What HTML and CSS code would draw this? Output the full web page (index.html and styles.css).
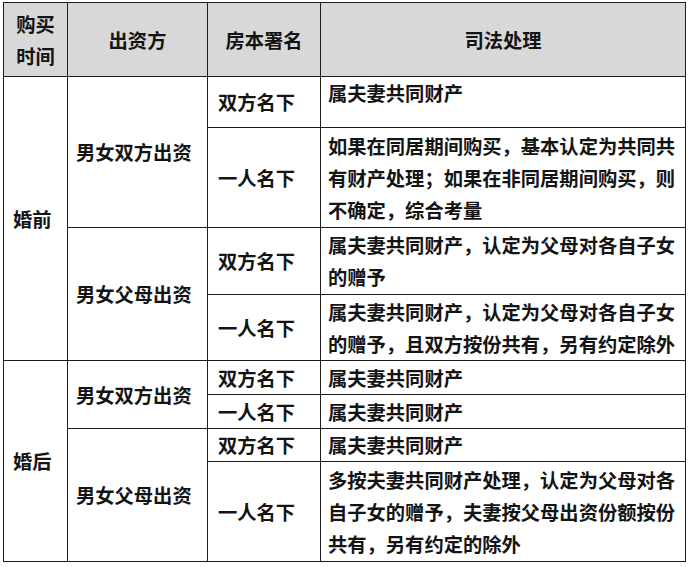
FILE: index.html
```html
<!DOCTYPE html>
<html lang="zh">
<head>
<meta charset="utf-8">
<title>购房出资与司法处理</title>
<link rel="stylesheet" href="styles.css">
</head>
<body>
<table class="grid">
  <colgroup>
    <col class="c-time">
    <col class="c-payer">
    <col class="c-name">
    <col class="c-law">
  </colgroup>
  <thead>
    <tr class="h-head">
      <th class="th-time">购买时间</th>
      <th>出资方</th>
      <th>房本署名</th>
      <th>司法处理</th>
    </tr>
  </thead>
  <tbody>
    <tr class="h-51">
      <td class="cell-time" rowspan="4">婚前</td>
      <td class="cell-payer" rowspan="2">男女双方出资</td>
      <td class="cell-name">双方名下</td>
      <td class="cell-law top">属夫妻共同财产</td>
    </tr>
    <tr class="h-100">
      <td class="cell-name">一人名下</td>
      <td class="cell-law">如果在同居期间购买，基本认定为共同共有财产处理；如果在非同居期间购买，则不确定，综合考量</td>
    </tr>
    <tr class="h-67">
      <td class="cell-payer" rowspan="2">男女父母出资</td>
      <td class="cell-name">双方名下</td>
      <td class="cell-law">属夫妻共同财产，认定为父母对各自子女的赠予</td>
    </tr>
    <tr class="h-66">
      <td class="cell-name">一人名下</td>
      <td class="cell-law">属夫妻共同财产，认定为父母对各自子女的赠予，且双方按份共有，另有约定除外</td>
    </tr>
    <tr class="h-34">
      <td class="cell-time" rowspan="4">婚后</td>
      <td class="cell-payer" rowspan="2">男女双方出资</td>
      <td class="cell-name">双方名下</td>
      <td class="cell-law">属夫妻共同财产</td>
    </tr>
    <tr class="h-34">
      <td class="cell-name">一人名下</td>
      <td class="cell-law">属夫妻共同财产</td>
    </tr>
    <tr class="h-33">
      <td class="cell-payer" rowspan="2">男女父母出资</td>
      <td class="cell-name">双方名下</td>
      <td class="cell-law">属夫妻共同财产</td>
    </tr>
    <tr class="h-100">
      <td class="cell-name">一人名下</td>
      <td class="cell-law">多按夫妻共同财产处理，认定为父母对各自子女的赠予，夫妻按父母出资份额按份共有，另有约定的除外</td>
    </tr>
  </tbody>
</table>
</body>
</html>
```
FILE: styles.css
```css
html, body {
  margin: 0;
  padding: 0;
  background: #ffffff;
}

body {
  padding: 2px 0 0 3px;
  font-family: "Noto Sans CJK SC", "Noto Sans", sans-serif;
  font-size: 19.3px;
  font-weight: 700;
  color: #141414;
}

.grid {
  border-collapse: collapse;
  table-layout: fixed;
  width: 682px;
}

.c-time { width: 64px; }
.c-payer { width: 140px; }
.c-name { width: 113px; }
.c-law { width: 365px; }

.grid th,
.grid td {
  border: 1.5px solid #1c1c1c;
  line-height: 32px;
  vertical-align: middle;
  padding: 0;
}

.grid th {
  background: #d8d8d8;
  text-align: center;
  font-weight: 700;
  padding: 0 9px;
}

.h-head { height: 74px; }
.h-51 { height: 51px; }
.h-100 { height: 100px; }
.h-67 { height: 67px; }
.h-66 { height: 66px; }
.h-34 { height: 34px; }
.h-33 { height: 33px; }

.grid .cell-time { padding-left: 9px; }
.grid .cell-payer { padding-left: 8px; }
.grid .cell-name { padding-left: 10px; }
.grid .cell-law { padding: 0 6px 0 7px; }
.grid .cell-law.top { vertical-align: top; padding-top: 0; }
```
